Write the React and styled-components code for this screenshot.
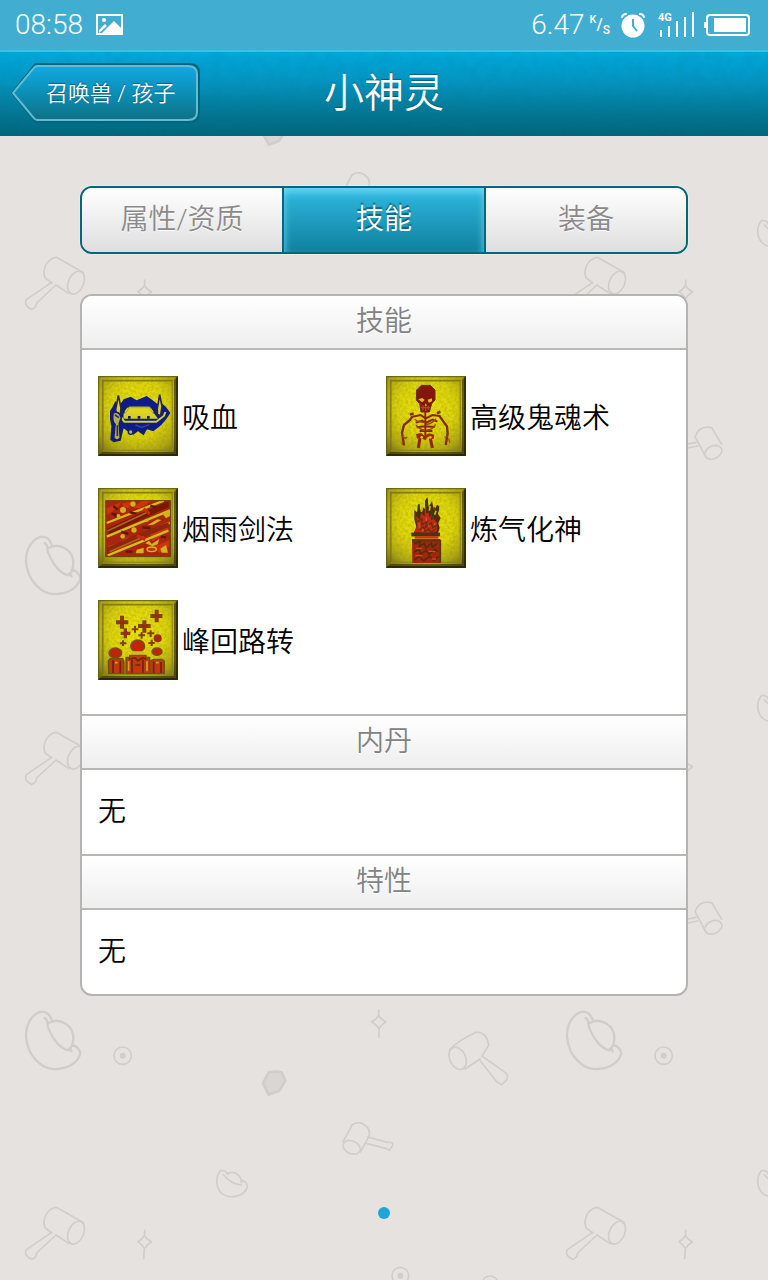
import React, { useState } from "react";
import styled, { createGlobalStyle, css } from "styled-components";

const GlobalStyle = createGlobalStyle`
  *, *::before, *::after { box-sizing: border-box; }
  body {
    margin: 0;
    background: #e5e2df;
    font-family: Roboto, "Noto Sans CJK SC", sans-serif;
    font-weight: 350;
    color: #000;
  }
  h1, h2, p, ul { margin: 0; padding: 0; font-weight: inherit; }
  button { font: inherit; border: 0; padding: 0; cursor: pointer; }
`;

const Screen = styled.div`
  position: relative;
  min-height: 100vh;
  display: flex;
  flex-direction: column;
  isolation: isolate;
`;

const Backdrop = styled.svg`
  position: absolute;
  inset: 0;
  z-index: -1;
  width: 100%;
  height: 100%;
`;

const StatusBar = styled.div`
  display: flex;
  align-items: center;
  height: 50px;
  padding: 0 18px 0 15px;
  background: #40add1;
  color: #fff;
  font-size: 28px;
  line-height: 50px;
`;

const StatusGroup = styled.div`
  display: flex;
  align-items: center;
  gap: ${(p) => p.$gap}px;
  margin-left: ${(p) => (p.$end ? "auto" : "0")};
`;

const Speed = styled.span`
  display: flex;
  align-items: center;
  gap: 5px;
`;

const Unit = styled.span`
  display: flex;
  line-height: 14px;
  font-weight: 500;
`;

const UnitPart = styled.span`
  padding-top: ${(p) => p.$drop}px;
  font-size: ${(p) => p.$size}px;
`;

const Header = styled.header`
  position: relative;
  display: grid;
  grid-template-columns: 1fr auto 1fr;
  align-items: center;
  height: 86px;
  padding: 0 11px 2px;
  border-top: 2px solid #42bde3;
  background: linear-gradient(#00a8db, #0594c0 35%, #047a98 68%, #03647b);
`;

const HeaderGrain = styled.svg`
  position: absolute;
  inset: 0;
  width: 100%;
  height: 100%;
  opacity: 0.1;
`;

const BackWrap = styled.div`
  position: relative;
  z-index: 0;
`;

const BackButton = styled.button`
  position: relative;
  display: block;
  width: 189px;
  height: 60px;
  padding: 0 24px 0 35px;
  background: none;
  color: #fff;
  font-size: 22px;
  line-height: 62px;
  white-space: nowrap;
  text-align: left;
  text-shadow: 0 -1px 1px rgba(0, 60, 80, 0.6);
`;

const BackShape = styled.svg`
  position: absolute;
  inset: 0;
  z-index: -1;
`;

const Title = styled.h1`
  position: relative;
  padding-top: 2px;
  color: #fff;
  font-size: 40px;
  line-height: 60px;
  text-shadow: 0 -1px 1px rgba(0, 60, 80, 0.6);
`;

const Main = styled.main`
  flex: 1;
  display: flex;
  flex-direction: column;
  gap: 40px;
  padding: 50px 80px 61px;
`;

const Tabs = styled.div`
  display: flex;
  height: 68px;
  border: 2px solid #04687a;
  border-radius: 12px;
  overflow: hidden;
  box-shadow: 0 0 1px 1px rgba(255, 255, 255, 0.3);
`;

const Tab = styled.button`
  flex: 1;
  font-size: 28px;
  line-height: 60px;
  color: #8b8b8b;
  background: linear-gradient(#fff, #dedede);
  text-shadow: 0 1px 1px #fff;

  & + & { border-left: 2px solid #04687a; }

  ${(p) =>
    p.$active &&
    css`
      color: #fff;
      background: linear-gradient(#2fb9e2, #10809e);
      box-shadow: inset 0 10px 8px -6px rgba(125, 224, 250, 0.8),
        inset 6px 0 6px -4px rgba(100, 205, 230, 0.7),
        inset -6px 0 6px -4px rgba(100, 205, 230, 0.7);
      text-shadow: 0 -2px 1px rgba(20, 70, 85, 0.75);
    `}
`;

const Card = styled.div`
  border: 2px solid #b4b5b3;
  border-radius: 12px;
  overflow: hidden;
  background: #fff;
`;

const SectionTitle = styled.h2`
  height: 54px;
  border-bottom: 2px solid #b8b8b6;
  background: linear-gradient(#fff, #eee);
  color: #838383;
  font-size: 28px;
  line-height: 52px;
  text-align: center;
  text-shadow: 0 1px 1px #fff;

  section + section > & {
    height: 56px;
    border-top: 2px solid #b8b8b6;
  }
`;

const SkillGrid = styled.ul`
  display: grid;
  grid-template-columns: 1fr 1fr;
  gap: 32px 4px;
  padding: 26px 16px 34px;
  list-style: none;
`;

const Skill = styled.li`
  display: flex;
  align-items: center;
  gap: 4px;
  font-size: 28px;
  line-height: 40px;
`;

const SkillName = styled.span`
  padding-top: 6px;
`;

const SkillArt = styled.svg`
  flex: none;
  width: 80px;
  height: 80px;
`;

const Note = styled.p`
  padding: 22px 16px;
  font-size: 28px;
  line-height: 40px;
`;

const PageDot = styled.span`
  align-self: center;
  width: 12px;
  height: 12px;
  margin-top: auto;
  border-radius: 50%;
  background: #1fa6d6;
`;

const PaintStore = styled.svg`
  position: absolute;
  width: 0;
  height: 0;
`;

function BackgroundPattern() {
  return (
    <Backdrop aria-hidden="true">
      <defs>
        <pattern id="tile" width="541" height="475" patternUnits="userSpaceOnUse" patternTransform="translate(0 40)">
          <g transform="scale(.33333)" fill="none" stroke="#d1cdca" strokeWidth="7" strokeLinejoin="round" strokeLinecap="round">
            <path d="M157 94C150 73 138 65 127 65C99 68 77 100 78 139C83 203 130 241 170 237C206 235 234 219 241 190C239 176 228 168 216 164M148 98C178 82 222 105 220 146C219 162 215 173 206 181M134 84C149 92 136 102 148 121C160 151 183 177 206 181C206 171 212 175 215 184" />
            <circle cx="368" cy="197" r="26" strokeWidth="5" />
            <circle cx="368" cy="197" r="9" fill="#d1cdca" stroke="none" />
            <path d="M1136 76Q1142 88 1158 95Q1144 103 1137 116Q1130 103 1114 95Q1130 88 1136 76ZM1136 60V76M1137 116V142" strokeWidth="5" />
            <path d="M806 247Q825 242 845 247L856 272L838 302L806 314L789 280Z" fill="#dad6d4" strokeWidth="8" />
            <g strokeWidth="5">
              <path d="M1029 456L1056 405C1079 387 1115 409 1107 440L1081 486M1103 441L1163 457Q1182 455 1178 467L1168 481L1157 475L1099 460" />
              <ellipse cx="1055" cy="472" rx="27" ry="19" transform="rotate(24 1055 472)" />
              <path d="M684 553C679 544 671 540 661 542C646 560 647 588 661 606C685 630 730 622 742 592C742 582 737 574 728 572M681 552C701 540 724 553 724 578M670 554C686 574 706 583 724 585" />
              <path d="M135 713C126 690 140 655 169 652L251 698M135 713L155 729M168 735L207 761M155 727L79 779Q69 794 94 808Q108 805 110 789L168 735" />
              <ellipse cx="228" cy="728" rx="23" ry="36" transform="rotate(24 228 728)" />
              <path d="M1348 180C1371 155 1406 137 1428 127C1451 124 1464 143 1466 166L1446 198M1395 237L1440 207M1446 198L1512 245Q1527 254 1521 269L1505 284L1490 275L1437 208" />
              <ellipse cx="1373" cy="205" rx="24" ry="35" transform="rotate(-25 1373 205)" />
              <path d="M433 736Q439 748 455 755Q441 763 433 776Q427 763 414 755Q427 748 433 736ZM434 720V736M433 776L431 806" />
              <circle cx="1201" cy="857" r="25" />
              <circle cx="1201" cy="857" r="9" fill="#d1cdca" stroke="none" />
              <path d="M1445 882Q1450 858 1470 858Q1490 858 1496 882L1486 910L1454 910Z" />
              <path d="M462 1190Q475 1154 512 1163L542 1213M462 1190L491 1244M465 1207L410 1218M470 1218L410 1230" />
              <ellipse cx="517" cy="1237" rx="27" ry="19" transform="rotate(-25 517 1237)" />
            </g>
          </g>
        </pattern>
      </defs>
      <rect width="100%" height="100%" fill="url(#tile)" />
    </Backdrop>
  );
}

function PhotoIcon() {
  return (
    <svg width="28" height="22" viewBox="0 0 28 22" aria-hidden="true">
      <path d="M1 1H26V20H1Z" fill="none" stroke="#fff" strokeWidth="2" />
      <path d="M10 15L18 7L26 15V20H5Z" fill="#fff" />
      <path d="M3 16L9 10L11 12L3 19Z" fill="#fff" />
      <circle cx="8" cy="6" r="2" fill="#fff" />
    </svg>
  );
}

function AlarmIcon() {
  return (
    <svg width="26" height="26" viewBox="0 0 26 26" aria-hidden="true">
      <circle cx="13" cy="14" r="11.5" fill="#fff" />
      <path d="M2 5Q3 2 6 2M20 2Q23 2 24 5" stroke="#fff" strokeWidth="2" fill="none" strokeLinecap="round" />
      <path d="M13 7V14L17 19" stroke="#40add1" strokeWidth="2" fill="none" />
    </svg>
  );
}

function SignalIcon() {
  return (
    <svg width="38" height="28" viewBox="0 0 38 28" aria-hidden="true">
      <text x="2" y="10" fill="#fff" fontSize="11" fontWeight="700" fontFamily="Roboto, sans-serif">4G</text>
      <path d="M5 19V26M13 15V26M21 10V26M29 6V26M37 1V26" stroke="#fff" strokeWidth="2" />
    </svg>
  );
}

function BatteryIcon() {
  return (
    <svg width="46" height="24" viewBox="0 0 46 24" aria-hidden="true">
      <rect x="3" y="2" width="42" height="20" rx="3" fill="none" stroke="#fff" strokeWidth="2" />
      <path d="M0 9H2V15H0ZM10 5H42V19H10Z" fill="#fff" />
    </svg>
  );
}

function Plaque({ children }) {
  return (
    <SkillArt viewBox="0 0 240 240" aria-hidden="true">
      <rect width="240" height="240" fill="url(#brass)" />
      <rect width="240" height="240" filter="url(#grain)" opacity=".4" />
      <path d="M0 240V0H240L236 4H4V236Z" fill="#5f5b10" opacity=".8" />
      <path d="M240 0V240H0L12 228H228V12Z" fill="#353207" opacity=".65" />
      <path d="M240 0V240H0L6 234H234V6Z" fill="#262405" opacity=".8" />
      <path d="M14 224V14H224" fill="none" stroke="#736f13" strokeWidth="5" opacity=".8" />
      <path d="M14 223H223V14" fill="none" stroke="#8c861a" strokeWidth="4" opacity=".8" />
      <g filter="url(#soften)">{children}</g>
    </SkillArt>
  );
}

function SharedPaint() {
  return (
    <PaintStore aria-hidden="true">
      <defs>
        <radialGradient id="brass" cx="50%" cy="40%" r="72%">
          <stop offset="0" stopColor="#efe60a" />
          <stop offset=".5" stopColor="#dcd30e" />
          <stop offset=".8" stopColor="#aca416" />
          <stop offset="1" stopColor="#6f6917" />
        </radialGradient>
        <filter id="grain">
          <feTurbulence type="fractalNoise" baseFrequency=".12" numOctaves="2" />
          <feColorMatrix values="0 0 0 0 .3  0 0 0 0 .28  0 0 0 0 0  2 0 0 0 -.7" />
        </filter>
        <filter id="soften">
          <feGaussianBlur stdDeviation="1.5" />
        </filter>
      </defs>
    </PaintStore>
  );
}

function FangsArt() {
  return (
    <Plaque>
      <path d="M44 92L52 76L66 86L77 70L98 62L116 73L146 60L163 72L178 84L191 82L204 93L217 111L205 129L190 147L166 166L147 160L137 178L120 166L106 176L92 168L77 157L68 194L47 199L37 191L40 151L36 129L36 105Z" fill="#111b87" />
      <path d="M77 105L86 93H160L170 107L161 120H84Z" fill="#e0d61c" stroke="#17205f" strokeWidth="5" />
      <path d="M81 112L95 94H153L165 111" fill="none" stroke="#b8b83d" strokeWidth="5" />
      <path d="M77 112H168L180 128H76Z" fill="#d8ce2c" />
      <path d="M70 125L79 137H175L198 119L202 108" fill="none" stroke="#d0cb47" strokeWidth="6" />
      <path d="M90 124H98M119 124H127M147 124H155" stroke="#131a5b" strokeWidth="8" />
      <path d="M53 100L61 58L69 96L66 127L57 129ZM178 98L185 56L192 91L188 119L178 115Z" fill="#d9cf38" stroke="#28264b" strokeWidth="5" />
      <path d="M45 111Q63 103 70 125L64 143L67 187Q58 197 47 187L51 145Q41 138 45 111Z" fill="#afae54" stroke="#171d62" strokeWidth="5" />
      <path d="M51 117L63 125M58 148V180" stroke="#2b2b71" strokeWidth="5" />
      <circle cx="98" cy="168" r="7" fill="#b9b34a" stroke="#11207f" strokeWidth="4" />
      <path d="M112 147L131 154L154 146" fill="none" stroke="#3e44a0" strokeWidth="4" />
    </Plaque>
  );
}

function SkeletonArt() {
  return (
    <Plaque>
      <path d="M92 42L106 28H133L147 42V72L137 83L130 108H105L101 83L91 72Z" fill="#85190b" stroke="#62330a" strokeWidth="3" />
      <path d="M97 70L109 66L116 72L108 79ZM125 71L138 67L138 76L128 80ZM119 82L123 89H116Z" fill="#e2bd27" />
      <path d="M105 95H132M111 88V103M119 89V105M127 89V101" stroke="#b5442a" strokeWidth="4" />
      <path d="M118 106V185M79 122L104 117L119 128L139 117L162 120M89 140L109 134L119 141L140 131L154 137M92 154L117 151L146 153M101 165H139" fill="none" stroke="#8a260c" strokeWidth="6" />
      <path d="M86 130Q99 140 117 140M150 128Q142 142 120 146M90 147Q103 163 117 162M149 145Q139 163 121 162" fill="none" stroke="#9d4b17" strokeWidth="4" />
      <path d="M79 121L72 132L54 147L48 170L54 208M159 118L176 142L183 151L185 172L179 207M72 116L83 112M153 112L163 107" fill="none" stroke="#7e2c0b" strokeWidth="7" />
      <path d="M49 181L58 187L64 183M50 195L48 205M176 184L185 181M188 187L191 200" fill="none" stroke="#a4461b" strokeWidth="4" />
      <path d="M90 174L106 171L116 180L129 172L145 176L143 188L132 191L127 181L118 193L103 185L93 188Z" fill="#a12a10" />
      <path d="M102 185L97 216M133 187L139 216" stroke="#8b280b" strokeWidth="9" />
      <circle cx="107" cy="184" r="4" fill="#e5bd41" /><circle cx="133" cy="184" r="4" fill="#e5bd41" />
    </Plaque>
  );
}

function SwordsArt() {
  return (
    <Plaque>
      <rect x="23" y="37" width="195" height="169" fill="#a92608" />
      <path d="M25 61L70 42L59 58L28 81ZM72 46L99 41L94 61L75 57ZM105 60L131 38L158 40L127 60ZM30 174L67 162L85 148L110 150L77 178L29 196ZM155 137L207 113L215 128L163 160ZM165 178L214 156V176L185 194Z" fill="#c9360d" />
      <path d="M27 122L212 38L213 57L33 139Z" fill="#741b05" />
      <path d="M26 105L197 38M26 146L216 67M29 188L215 104M29 202L211 128" stroke="#d2be12" strokeWidth="7" />
      <path d="M24 181L119 138L212 102V117L125 153L28 199Z" fill="#8c2608" />
      <path d="M28 129L87 101L145 74M35 191L87 168L137 146" stroke="#b35f22" strokeWidth="5" fill="none" />
      <path d="M137 62L155 78M117 143L142 155" stroke="#c92c18" strokeWidth="9" />
      <g fill="#d4b21b">
        <circle cx="75" cy="66" r="9" /><circle cx="105" cy="48" r="8" /><circle cx="61" cy="84" r="6" />
        <circle cx="108" cy="126" r="8" /><circle cx="74" cy="145" r="7" /><circle cx="146" cy="97" r="5" />
        <path d="M148 112L178 94L190 96L166 110ZM142 166L153 158L161 168L184 153L179 169L164 175ZM116 185L137 179V196H113ZM187 182L204 171L210 194H191ZM194 78L216 66V84L204 91Z" />
      </g>
      <ellipse cx="161" cy="184" rx="14" ry="7" fill="#bd360f" stroke="#deb31e" strokeWidth="4" />
      <path d="M41 78H52V88M95 73L116 77M70 131L91 138M133 118L157 120M189 145L204 149M83 191H103M46 54L59 65M157 53L174 58" fill="none" stroke="#641508" strokeWidth="7" />
      <path d="M23 38H218V206H23Z" fill="none" stroke="#66430b" strokeWidth="3" />
    </Plaque>
  );
}

function FlameArt() {
  return (
    <Plaque>
      <path d="M82 137L91 117L85 94L85 65L93 73L96 47L104 68L111 58L117 63V39L124 27L128 58L138 39L144 69L153 50L160 55L156 78L164 90L157 106L161 120L156 136Z" fill="#572a0a" />
      <path d="M86 133L94 112L90 85L102 95L105 75L116 85L117 51L126 70L131 89L142 71L143 94L152 103L153 130L131 139L107 134Z" fill="#bf2918" />
      <path d="M99 49L99 88M123 34V75M145 58L137 95M158 61L149 84" stroke="#343b09" strokeWidth="5" />
      <path d="M110 54L106 72M132 54L130 68M150 68L146 80" stroke="#c9bd16" strokeWidth="5" />
      <path d="M94 101L108 93L107 111L123 101L118 119L136 104L141 119L155 111M99 125L112 117L117 131L128 123L135 133L148 123" fill="none" stroke="#66310c" strokeWidth="4" />
      <path d="M99 105L101 121M121 88V99M130 111L127 116M112 123L109 131M146 105V111" stroke="#dc4c27" strokeWidth="5" />
      <path d="M76 134H162V145H76Z" fill="#4b3609" />
      <path d="M86 148H157" stroke="#c83b17" strokeWidth="8" />
      <path d="M78 153H162V225H79Z" fill="#a22611" />
      <path d="M78 158H163V224" fill="none" stroke="#54390b" strokeWidth="5" />
      <path d="M84 167L103 161L100 176L115 166L120 180L136 165L139 177L154 166M83 193L99 184L105 198L121 187L129 199L146 184L156 191M84 217L99 205L113 218L131 205L144 217L158 205" fill="none" stroke="#532e0b" strokeWidth="5" />
      <path d="M91 181H107M127 190H147M88 203H109M137 213H150" stroke="#da4422" strokeWidth="4" />
    </Plaque>
  );
}

function RevivalArt() {
  return (
    <Plaque>
      <g fill="none" stroke="#824007">
        <path d="M72 47V86M54 67H91M176 29V67M157 48H193M139 61V98M120 78H158" strokeWidth="12" />
        <path d="M82 85V115M68 100H97" strokeWidth="10" />
        <path d="M111 77V98M101 88H121M158 91V111M148 100H169M75 121V138M66 130H85M131 96V116M121 106H141M161 119V138M151 129H170" strokeWidth="6" />
      </g>
      <path d="M66 68H79M132 79H147M170 48H183M77 99H90" stroke="#a62509" strokeWidth="8" />
      <ellipse cx="119" cy="138" rx="21" ry="18" fill="#c1250d" stroke="#76510b" strokeWidth="4" />
      <ellipse cx="52" cy="159" rx="19" ry="15" fill="#bb280c" stroke="#76500a" strokeWidth="4" />
      <ellipse cx="177" cy="155" rx="15" ry="11" fill="#bb280c" stroke="#76500a" strokeWidth="4" />
      <circle cx="179" cy="115" r="12" fill="#a42a0b" />
      <path d="M100 154H137L141 163H99Z" fill="#d0bc20" />
      <path d="M84 172H95V166H144V172H155V220H84ZM31 182L37 176H74L78 185V220H32ZM155 184L166 178H193L199 184V220H156Z" fill="#be3a10" stroke="#6b550c" strokeWidth="4" />
      <path d="M93 177L111 174L119 182L134 174L145 177M102 179V218M135 179V218M112 195H127M45 181V219M67 184V219M167 185V219M189 186V219" fill="none" stroke="#6f250a" strokeWidth="5" />
      <path d="M92 184V212M147 183V214M51 188H59M174 188H182" stroke="#d8a02a" strokeWidth="5" />
      <path d="M110 201H128V217H110ZM51 201H62V218H51ZM173 200H184V217H173Z" fill="#cb3015" />
    </Plaque>
  );
}

const TABS = ["属性/资质", "技能", "装备"];

const SKILLS = [
  { name: "吸血", Art: FangsArt },
  { name: "高级鬼魂术", Art: SkeletonArt },
  { name: "烟雨剑法", Art: SwordsArt },
  { name: "炼气化神", Art: FlameArt },
  { name: "峰回路转", Art: RevivalArt },
];

export default function App() {
  const [active, setActive] = useState("技能");

  return (
    <Screen>
      <GlobalStyle />
      <SharedPaint />
      <BackgroundPattern />
      <StatusBar>
        <StatusGroup $gap={13}>
          <span>08:58</span>
          <PhotoIcon />
        </StatusGroup>
        <StatusGroup $end $gap={10}>
          <Speed>
            6.47
            <Unit>
              <UnitPart $size={11} $drop={0}>K</UnitPart>
              <UnitPart $size={16} $drop={5}>/</UnitPart>
              <UnitPart $size={12} $drop={10}>S</UnitPart>
            </Unit>
          </Speed>
          <AlarmIcon />
          <SignalIcon />
          <BatteryIcon />
        </StatusGroup>
      </StatusBar>

      <Header>
        <HeaderGrain aria-hidden="true">
          <filter id="leather">
            <feTurbulence type="fractalNoise" baseFrequency=".09" numOctaves="2" />
            <feColorMatrix values="0 0 0 0 0  0 0 0 0 .2  0 0 0 0 .3  3 0 0 0 -1.2" />
          </filter>
          <rect width="100%" height="100%" filter="url(#leather)" />
        </HeaderGrain>
        <BackWrap>
          <BackButton type="button">
            <BackShape width="189" height="60" viewBox="0 0 189 60" aria-hidden="true">
              <defs>
                <linearGradient id="back" x1="0" y1="0" x2="0" y2="1">
                  <stop offset="0" stopColor="#12a9e3" />
                  <stop offset=".5" stopColor="#0b8fb5" />
                  <stop offset="1" stopColor="#0f7085" />
                </linearGradient>
              </defs>
              <path d="M24 0H179Q189 0 189 10V50Q189 60 179 60H24L0 30Z" fill="#07647f" />
              <path d="M26 3H177Q186 3 186 11V49Q186 57 177 57H26Q24 57 22 54L2 30L22 6Q24 3 26 3Z" fill="url(#back)" stroke="#62bdd3" strokeWidth="2" />
            </BackShape>
            召唤兽 / 孩子
          </BackButton>
        </BackWrap>
        <Title>小神灵</Title>
      </Header>

      <Main>
        <Tabs role="tablist">
          {TABS.map((label) => (
            <Tab
              key={label}
              type="button"
              role="tab"
              aria-selected={label === active}
              $active={label === active}
              onClick={() => setActive(label)}
            >
              {label}
            </Tab>
          ))}
        </Tabs>

        <Card>
          <section>
            <SectionTitle>技能</SectionTitle>
            <SkillGrid>
              {SKILLS.map(({ name, Art }) => (
                <Skill key={name}>
                  <Art />
                  <SkillName>{name}</SkillName>
                </Skill>
              ))}
            </SkillGrid>
          </section>
          <section>
            <SectionTitle>内丹</SectionTitle>
            <Note>无</Note>
          </section>
          <section>
            <SectionTitle>特性</SectionTitle>
            <Note>无</Note>
          </section>
        </Card>

        <PageDot />
      </Main>
    </Screen>
  );
}
